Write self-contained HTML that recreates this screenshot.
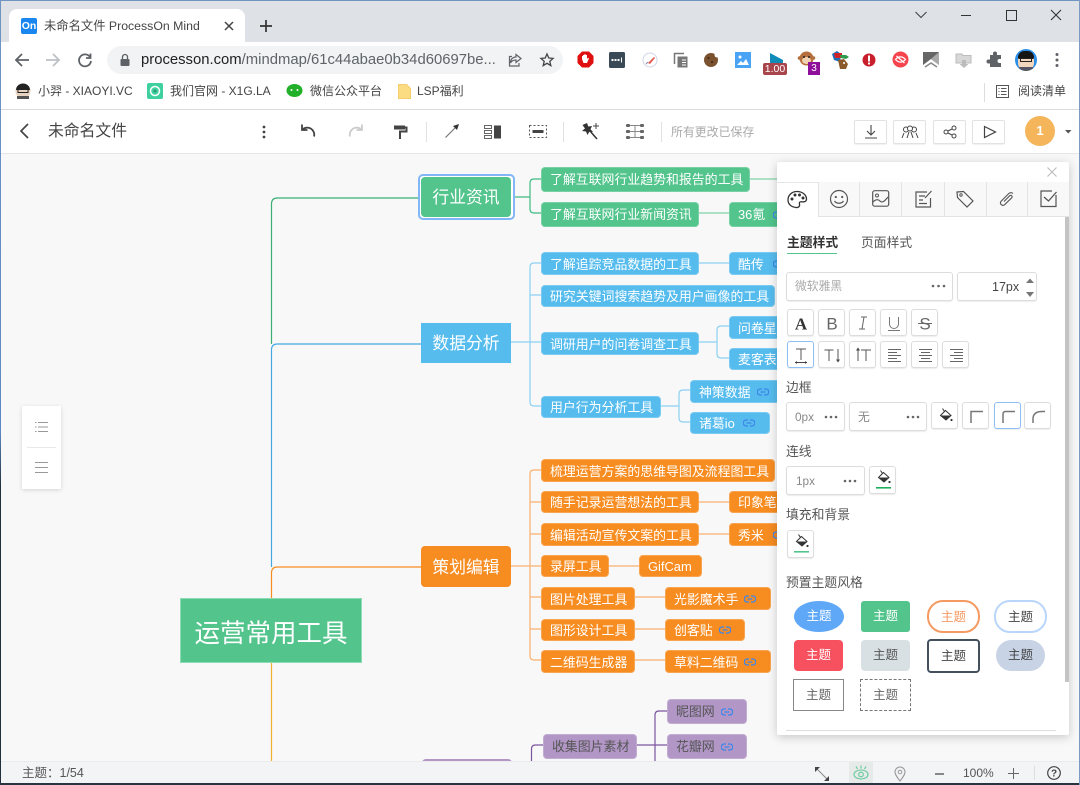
<!DOCTYPE html>
<html><head><meta charset="utf-8">
<style>
*{box-sizing:border-box}
html{background:#f8f8f8}
html,body{margin:0;padding:0;width:1080px;height:785px;overflow:hidden;font-family:"Liberation Sans","Noto Sans CJK SC",sans-serif;color:#444}
body{background:#f8f8f8;filter:blur(.3px)}
.a{position:absolute}
svg{position:absolute;overflow:visible}
.n{position:absolute;border-radius:4px;color:#fff;font-size:12.9px;padding-left:8px;padding-top:1px;white-space:nowrap;border:1px solid rgba(255,255,255,.22);overflow:hidden}
.g{background:#52c48c}.b{background:#56bcee}.o{background:#f78c21}.p{background:#b196c6;color:#555}
.m{position:absolute;width:90px;text-align:center;color:#fff;font-size:16.8px;white-space:nowrap}
.n svg{position:absolute;top:50%;margin-top:-4px}
.btn{position:absolute;background:#fff;border:1px solid #ddd;border-radius:3px;box-shadow:0 1px 1px rgba(0,0,0,.08)}
.btn svg{left:0;top:0}
.lb{position:absolute;font-size:12.8px;color:#555;white-space:nowrap}
.bm{position:absolute;top:84px;font-size:12px;color:#444;white-space:nowrap;line-height:14px}
.tb{position:absolute;top:120px;height:24px;width:33px;background:#fff;border:1px solid #e2e2e2;border-radius:2px;box-shadow:0 1px 1px rgba(0,0,0,.06)}
.pr{position:absolute;font-size:12.5px;text-align:center;white-space:nowrap}
.tsep{position:absolute;top:182px;height:35px;width:1px;background:#e3e3e3}
</style></head><body>
<svg width="0" height="0" style="position:absolute"><defs>
<symbol id="lk" viewBox="0 0 12 8"><path d="M5 1H3.200a3 3 0 0 0 0 6H5M7 1h1.800a3 3 0 0 1 0 6H7M3.600 4h4.800" fill="none" stroke="#3f86e8" stroke-width="1.300"/></symbol>
<symbol id="bk" viewBox="0 0 27 27"><path d="M13.500 7.500L19 12.500 14 17 8.500 12.500z" fill="#fff" stroke="#333" stroke-width="1"/><path d="M8.500 12.500H19L14 17z" fill="#333"/><path d="M12.500 8.500L10.500 5.500" stroke="#333" stroke-width="1"/><circle cx="19.500" cy="17" r="1.100" fill="#333"/></symbol>
</defs></svg>

<!-- Chrome -->
<div class="a" style="left:0;top:0;width:1080px;height:42px;background:#dee1e6"></div>
<div class="a" style="left:9px;top:9px;width:236px;height:33px;background:#fff;border-radius:8px 8px 0 0"></div>
<div class="a" style="left:21px;top:18px;width:16px;height:16px;background:#1a86f0;border-radius:2px;color:#fff;font-size:10.500px;font-weight:bold;line-height:16px;text-align:center">On</div>
<div class="a" style="left:44px;top:18px;font-size:12.300px;color:#444;white-space:nowrap;line-height:16px">未命名文件 ProcessOn Mind</div>
<svg style="left:223px;top:20px" width="12" height="12"><path d="M2 2l8 8M10 2l-8 8" stroke="#444" stroke-width="1.500"/></svg>
<svg style="left:259px;top:19px" width="14" height="14"><path d="M7 1v12M1 7h12" stroke="#333" stroke-width="1.700"/></svg>
<svg style="left:914px;top:10px" width="14" height="10"><path d="M1.500 2l5.500 5.500L12.500 2" fill="none" stroke="#444" stroke-width="1.100"/></svg>
<div class="a" style="left:961px;top:15px;width:10px;height:1px;background:#333"></div>
<div class="a" style="left:1006px;top:10px;width:11px;height:11px;border:1.200px solid #333"></div>
<svg style="left:1050px;top:9px" width="12" height="12"><path d="M1 1l10 10M11 1L1 11" stroke="#333" stroke-width="1.100"/></svg>

<div class="a" style="left:0;top:42px;width:1080px;height:67px;background:#fff"></div>
<div class="a" style="left:0;top:109px;width:1080px;height:1px;background:#dadce0"></div>
<svg style="left:14px;top:52px" width="16" height="16"><path d="M15 8H2M8 2L2 8l6 6" fill="none" stroke="#5f6368" stroke-width="1.800"/></svg>
<svg style="left:45px;top:52px" width="16" height="16"><path d="M1 8h13M8 2l6 6-6 6" fill="none" stroke="#bdc1c6" stroke-width="1.800"/></svg>
<svg style="left:77px;top:52px" width="16" height="16"><path d="M13 5A6 6 0 1 0 14 9M13.500 1.500V6H9" fill="none" stroke="#5f6368" stroke-width="1.800"/></svg>
<div class="a" style="left:107px;top:46px;width:456px;height:28px;background:#f1f3f4;border-radius:14px"></div>
<svg style="left:120px;top:54px" width="10" height="12"><rect x="0.500" y="5" width="9" height="7" rx="1" fill="#5f6368"/><path d="M2.500 5V3a2.500 2.500 0 0 1 5 0v2" fill="none" stroke="#5f6368" stroke-width="1.300"/></svg>
<div class="a" style="left:141px;top:51px;font-size:14.850px;color:#202124;white-space:nowrap;line-height:18px">processon.com<span style="color:#5f6368">/mindmap/61c44abae0b34d60697be...</span></div>
<svg style="left:508px;top:53px" width="14" height="14"><path d="M8 1.500l5 4-5 4V7C5 7 3.500 8 2.500 10 2.500 6.500 4.500 4 8 4zM11 10v3H1.500V3.500H4" fill="none" stroke="#5f6368" stroke-width="1.200"/></svg>
<svg style="left:540px;top:53px" width="14" height="14"><path d="M7 1l1.800 4 4.300.4-3.300 2.900 1 4.300L7 10.300 3.200 12.600l1-4.300L.9 5.400 5.200 5z" fill="none" stroke="#444" stroke-width="1.300"/></svg>

<!-- extensions -->
<svg style="left:577px;top:51px" width="17" height="17"><path d="M5 .5h7L16.500 5v7L12 16.500H5L.5 12V5z" fill="#e01010"/><path d="M5 8V5h1v2-3h1.300v3V3.300H8.700V7V4H10v4l1-1.300 1 .6L10 12H6.500z" fill="#fff"/></svg>
<svg style="left:609px;top:52px" width="16" height="16"><rect width="16" height="16" rx="1.500" fill="#3a4a57"/><rect x="2.500" y="7" width="2" height="2" fill="#fff"/><rect x="5.500" y="7" width="2" height="2" fill="#fff"/><rect x="8.500" y="7" width="2" height="2" fill="#fff"/><rect x="12" y="5.500" width="1" height="5" fill="#fff"/></svg>
<svg style="left:642px;top:52px" width="16" height="16"><circle cx="8" cy="8" r="7" fill="#fff" stroke="#cfd6e8"/><path d="M6 11l6-6 1 1-5 6z" fill="#e0574f"/><path d="M4 12l2-2" stroke="#88a" stroke-width="1"/></svg>
<svg style="left:673px;top:52px" width="16" height="16"><path d="M1.500 12V1.500H11" fill="none" stroke="#777" stroke-width="1.500"/><rect x="4.500" y="4.500" width="10" height="11" fill="#777"/><path d="M9 8h4M9 10.500h4M9 13h4" stroke="#fff"/></svg>
<svg style="left:703px;top:52px" width="16" height="16"><circle cx="8" cy="8" r="7" fill="#7a5230"/><circle cx="5.500" cy="6" r="1" fill="#3b2412"/><circle cx="9" cy="10" r="1" fill="#3b2412"/><circle cx="14" cy="3" r="2.500" fill="#fff"/></svg>
<svg style="left:735px;top:52px" width="16" height="16"><rect width="16" height="16" fill="#4aa3f5"/><circle cx="5" cy="5" r="1.500" fill="#fff"/><path d="M2 13l4-4 2 2 3-4 3 6z" fill="#fff"/></svg>
<svg style="left:767px;top:52px" width="20" height="13"><path d="M3 1l13 7v3H3z" fill="#0f8cb8"/></svg>
<div class="a" style="left:763px;top:63px;width:24px;height:12px;background:#a8444c;border-radius:2px;color:#fff;font-size:10.500px;line-height:12px;text-align:center">1.00</div>
<svg style="left:798px;top:51px" width="18" height="17"><circle cx="8.500" cy="7.500" r="7" fill="#b56f3c"/><circle cx="1.500" cy="7" r="1.800" fill="#b56f3c"/><circle cx="15.500" cy="7" r="1.800" fill="#b56f3c"/><ellipse cx="8.500" cy="9.500" rx="4.500" ry="3.500" fill="#f0d2b0"/><circle cx="6" cy="6" r="1" fill="#222"/><circle cx="11" cy="6" r="1" fill="#222"/></svg>
<div class="a" style="left:808px;top:62px;width:12px;height:13px;background:#8e0f99;color:#fff;font-size:10px;line-height:13px;text-align:center">3</div>
<svg style="left:831px;top:51px" width="20" height="19"><path d="M1 3l5-3 4 3-1 8-6-2z" fill="#1f6fb8"/><path d="M3 2h8v5H4z" fill="#d0232a"/><path d="M9 4h6l3 2-3 2-5-1z" fill="#2e9c4b"/><path d="M7 9l6-1 4 5-2 5H9z" fill="#8b5a2b"/><circle cx="13" cy="12" r="1" fill="#fff"/></svg>
<svg style="left:861px;top:52px" width="16" height="16"><circle cx="8" cy="8" r="6.500" fill="#c8202c"/><rect x="7" y="3.500" width="2" height="6" fill="#fff"/><rect x="7" y="10.500" width="2" height="2" fill="#fff"/></svg>
<svg style="left:892px;top:51px" width="17" height="17"><circle cx="8.500" cy="8.500" r="8" fill="#f5444e"/><path d="M3.500 8.500c3-3.500 7-3.500 10 0-3 3.500-7 3.500-10 0zM4.500 5l8 7" fill="none" stroke="#fff" stroke-width="1.200"/></svg>
<svg style="left:923px;top:52px" width="16" height="16"><path d="M0 0h16v13L8 7 0 13z" fill="#666"/><path d="M16 0v13L8 7z" fill="#aaa"/><path d="M2 15l6-4 6 4" fill="none" stroke="#888" stroke-width="1.500"/></svg>
<svg style="left:955px;top:52px" width="17" height="17"><path d="M1 2h6l1 1.500h8V11H1z" fill="#d8d8d8" stroke="#bbb"/><path d="M7 8h4v4h2.500L9 16l-4.500-4H7z" fill="#bbb"/></svg>
<svg style="left:987px;top:52px" width="16" height="16"><path d="M6 1.500a2 2 0 0 1 4 0V3h4v4h-1.500a2 2 0 0 0 0 4H14v4H3V11.500H1.500a2 2 0 0 1 0-4H3V3h3z" fill="#5f6368"/></svg>
<div class="a" style="left:1015px;top:49px;width:22px;height:22px;border-radius:50%;background:#2b8fe8;overflow:hidden">
 <div class="a" style="left:3px;top:3px;width:16px;height:19px;border-radius:8px;background:#f1d6bd"></div>
 <div class="a" style="left:3px;top:2px;width:16px;height:8px;border-radius:8px 8px 2px 2px;background:#151515"></div>
 <div class="a" style="left:5px;top:9px;width:12px;height:4px;border:1px solid #222"></div>
 <div class="a" style="left:4px;top:18px;width:14px;height:5px;background:#556"></div>
</div>
<svg style="left:1055px;top:52px" width="4" height="16"><circle cx="2" cy="2.500" r="1.500" fill="#5f6368"/><circle cx="2" cy="8" r="1.500" fill="#5f6368"/><circle cx="2" cy="13.500" r="1.500" fill="#5f6368"/></svg>

<!-- bookmarks -->
<svg style="left:15px;top:83px" width="16" height="16"><circle cx="8" cy="8" r="7.500" fill="#e8d3c0"/><path d="M1 7a7 6.500 0 0 1 14 0z" fill="#222"/><rect x="3" y="6.500" width="10" height="3" fill="none" stroke="#222"/><path d="M2 13h12v3H2z" fill="#555"/></svg>
<div class="bm" style="left:38px">小羿 - XIAOYI.VC</div>
<svg style="left:147px;top:83px" width="16" height="16"><rect width="16" height="16" rx="2" fill="#3fd0a0"/><circle cx="8" cy="8" r="4.500" fill="none" stroke="#fff" stroke-width="1.500"/><circle cx="8" cy="8" r="1.500" fill="#2a9a78"/></svg>
<div class="bm" style="left:170px">我们官网 - X1G.LA</div>
<svg style="left:286px;top:84px" width="17" height="14"><ellipse cx="8.500" cy="6.500" rx="8" ry="6.500" fill="#22b02a"/><circle cx="5.500" cy="6" r="1" fill="#fff"/><circle cx="11.500" cy="6" r="1" fill="#fff"/></svg>
<div class="bm" style="left:310px">微信公众平台</div>
<svg style="left:398px;top:84px" width="13" height="15"><path d="M.5.500h8l4 4v10H.5z" fill="#fbdc82" stroke="#f4ce6a"/></svg>
<div class="bm" style="left:417px">LSP福利</div>
<div class="a" style="left:984px;top:83px;width:1px;height:19px;background:#ddd"></div>
<svg style="left:996px;top:85px" width="13" height="13"><rect x=".5" y=".5" width="12" height="12" fill="none" stroke="#555"/><path d="M2.500 3.500h1M5 3.500h5.500M2.500 6.500h1M5 6.500h5.500M2.500 9.500h1M5 9.500h5.500" stroke="#555"/></svg>
<div class="bm" style="left:1018px">阅读清单</div>

<!-- App toolbar -->
<div class="a" style="left:0;top:110px;width:1080px;height:44px;background:#fff;border-bottom:1px solid #e6e6e6"></div>
<svg style="left:18px;top:122px" width="12" height="18"><path d="M10 2L3 9l7 7" fill="none" stroke="#444" stroke-width="1.700"/></svg>
<div class="a" style="left:48px;top:122px;font-size:15.800px;color:#444;white-space:nowrap;line-height:20px">未命名文件</div>
<svg style="left:262px;top:125px" width="4" height="14"><circle cx="2" cy="2" r="1.400" fill="#444"/><circle cx="2" cy="7" r="1.400" fill="#444"/><circle cx="2" cy="12" r="1.400" fill="#444"/></svg>
<svg style="left:300px;top:123px" width="18" height="16"><path d="M2 1.500V7h5.500M2.500 6.500A7 7 0 0 1 14 13.500" fill="none" stroke="#444" stroke-width="1.800"/></svg>
<svg style="left:346px;top:123px" width="18" height="16"><path d="M16 1.500V7h-5.500M15.500 6.500A7 7 0 0 0 4 13.500" fill="none" stroke="#ccc" stroke-width="1.800"/></svg>
<svg style="left:393px;top:124px" width="14" height="16"><path d="M1 1.500h11v4H1z" fill="#444"/><path d="M12 3.500h1.500v4H7V15" fill="none" stroke="#444" stroke-width="2"/></svg>
<div class="a" style="left:426px;top:122px;width:1px;height:20px;background:#e2e2e2"></div>
<svg style="left:444px;top:123px" width="16" height="16"><path d="M1.500 14.500L11 5" stroke="#777" stroke-width="1.200"/><path d="M9 3l6-2-2 6z" fill="#333"/></svg>
<svg style="left:484px;top:125px" width="18" height="14"><path d="M.5.500h7v3h-7zM.5 5.500h7v3h-7zM.5 10.500h7v3h-7z" fill="none" stroke="#666"/><rect x="10" y=".5" width="7" height="13" fill="#444"/></svg>
<svg style="left:529px;top:125px" width="18" height="13"><rect x=".5" y=".5" width="17" height="12" fill="none" stroke="#555" stroke-dasharray="2 2"/><rect x="3.500" y="5" width="11" height="3" fill="#444"/></svg>
<div class="a" style="left:563px;top:122px;width:1px;height:20px;background:#e2e2e2"></div>
<svg style="left:580px;top:122px" width="20" height="18"><path d="M7 1l1.300 3.500L12 4l-1.500 3.200L13 10l-3.700-.3L7.500 13 6 9.500 2 9l3-2.500L2.500 3z" fill="#333"/><path d="M10 9l7 8" stroke="#333" stroke-width="1.500"/><path d="M16 1v6M13 4h6" stroke="#444"/></svg>
<svg style="left:626px;top:124px" width="18" height="15"><path d="M1 1.500h16M1 7.500h16M1 13.500h16M9 1.500v12" stroke="#888" stroke-width="1"/><g fill="#666"><rect x="0" y="0" width="4" height="3" rx="1"/><rect x="14" y="0" width="4" height="3" rx="1"/><rect x="0" y="6" width="4" height="3" rx="1"/><rect x="14" y="6" width="4" height="3" rx="1"/><rect x="0" y="12" width="4" height="3" rx="1"/><rect x="14" y="12" width="4" height="3" rx="1"/></g></svg>
<div class="a" style="left:661px;top:122px;width:1px;height:20px;background:#e2e2e2"></div>
<div class="a" style="left:671px;top:124px;font-size:11.900px;color:#aaa;white-space:nowrap;line-height:16px">所有更改已保存</div>
<div class="tb" style="left:854px"><svg style="left:9px;top:3px" width="14" height="16"><path d="M7 1v10M3 7l4 4 4-4M1 14h12" fill="none" stroke="#444" stroke-width="1.100"/></svg></div>
<div class="tb" style="left:893px"><svg style="left:7px;top:4px" width="18" height="14"><circle cx="5" cy="4.500" r="2.500" fill="none" stroke="#444"/><circle cx="13" cy="4.500" r="2.500" fill="none" stroke="#444"/><circle cx="9" cy="3.500" r="2.500" fill="#fff" stroke="#444"/><path d="M1 13l2-5M17 13l-2-5M6 13l2-6M12 13l-2-6" stroke="#444" fill="none"/></svg></div>
<div class="tb" style="left:933px"><svg style="left:9px;top:4px" width="14" height="14"><circle cx="11" cy="3" r="2" fill="none" stroke="#444"/><circle cx="3" cy="7" r="2" fill="none" stroke="#444"/><circle cx="11" cy="11" r="2" fill="none" stroke="#444"/><path d="M5 6l4-2M5 8l4 2" stroke="#444"/></svg></div>
<div class="tb" style="left:972px"><svg style="left:10px;top:4px" width="14" height="14"><path d="M1.500 1.500l11 5.500-11 5.500z" fill="none" stroke="#444" stroke-width="1.200"/></svg></div>
<div class="a" style="left:1025px;top:116px;width:30px;height:30px;border-radius:50%;background:#f5b65b;color:#fff;font-size:13px;font-weight:bold;text-align:center;line-height:30px">1</div>
<svg style="left:1065px;top:130px" width="7" height="4"><path d="M0 0h6.500L3.250 3.500z" fill="#555"/></svg>

<!-- Lines -->
<svg style="left:0;top:0" width="1080" height="785" fill="none" stroke-width="1.200">
<path d="M271.500 344V204Q271.500 198 277.500 198H421" stroke="#3aae75"/>
<path d="M271.500 567V350Q271.500 344 277.500 344H421" stroke="#45a8e0"/>
<path d="M271.500 598V573Q271.500 567 277.500 567H421" stroke="#f78c21"/>
<path d="M271.500 663V762" stroke="#f0b030"/>
<g stroke="#3fbb80"><path d="M511 197H530M541 179H534Q530 179 530 183V209Q530 213 534 213H541"/><path d="M699 213H729M750 179H780" stroke="#7fd3aa"/></g>
<g stroke="#8bd0f2"><path d="M511 342H541M541 263H534Q530 263 530 267V402Q530 406 534 406H541M530 295H541M699 263H729M699 342H717M729 326H721Q717 326 717 330V354Q717 358 721 358H729M661 406H679M690 390H683Q679 390 679 394V418Q679 422 683 422H690"/></g>
<g stroke="#f9b06e"><path d="M511 566H541M541 470H534Q530 470 530 474V656Q530 660 534 660H541M530 502H541M530 534H541M530 597H541M530 629H541M699 502H729M699 534H729M609 566H639M635 597H665M635 629H665M635 660H665"/></g>
<g stroke="#7b54a0"><path d="M531.500 762V749Q531.500 745 535.500 745H543M637 745H667M667 711H659Q655 711 655 715V762"/></g>
</svg>

<!-- Nodes -->
<div class="a" style="left:418px;top:174px;width:97px;height:46px;border:2px solid #82b6f6;border-radius:5px;background:#fff"></div>
<div class="m g" style="left:421px;top:177px;height:40px;line-height:41px;border-radius:4px">行业资讯</div>
<div class="m b" style="left:421px;top:323px;height:40px;line-height:42px">数据分析</div>
<div class="m o" style="left:421px;top:546px;height:41px;line-height:44px;border-radius:4px">策划编辑</div>
<div class="m p" style="left:422px;top:759px;height:30px;border-radius:4px"></div>
<div class="a" style="left:180px;top:598px;width:182px;height:65px;background:#52c48c;color:#fff;font-size:25.500px;text-align:center;line-height:71px;white-space:nowrap;border:1px solid #8edcb6">运营常用工具</div>

<div class="n g" style="left:541px;top:167px;width:209px;height:25px;line-height:22px">了解互联网行业趋势和报告的工具</div>
<div class="n g" style="left:541px;top:202px;width:158px;height:25px;line-height:22px">了解互联网行业新闻资讯</div>
<div class="n g" style="left:729px;top:202px;width:70px;height:25px;line-height:22px">36氪<svg style="left:43px" width="12" height="8"><use href="#lk"/></svg></div>
<div class="n b" style="left:541px;top:252px;width:158px;height:23px;line-height:21px">了解追踪竞品数据的工具</div>
<div class="n b" style="left:729px;top:252px;width:70px;height:23px;line-height:21px">酷传<svg style="left:43px" width="12" height="8"><use href="#lk"/></svg></div>
<div class="n b" style="left:541px;top:285px;width:234px;height:22px;line-height:20px">研究关键词搜索趋势及用户画像的工具</div>
<div class="n b" style="left:541px;top:332px;width:158px;height:23px;line-height:21px">调研用户的问卷调查工具</div>
<div class="n b" style="left:729px;top:316px;width:70px;height:23px;line-height:21px">问卷星</div>
<div class="n b" style="left:729px;top:348px;width:70px;height:22px;line-height:20px">麦客表</div>
<div class="n b" style="left:541px;top:396px;width:120px;height:22px;line-height:20px">用户行为分析工具</div>
<div class="n b" style="left:690px;top:380px;width:90px;height:23px;line-height:21px">神策数据<svg style="left:66px" width="12" height="8"><use href="#lk"/></svg></div>
<div class="n b" style="left:690px;top:412px;width:80px;height:22px;line-height:20px">诸葛io<svg style="left:52px" width="12" height="8"><use href="#lk"/></svg></div>

<div class="n o" style="left:541px;top:459px;width:234px;height:23px;line-height:21px">梳理运营方案的思维导图及流程图工具</div>
<div class="n o" style="left:541px;top:491px;width:158px;height:22px;line-height:20px">随手记录运营想法的工具</div>
<div class="n o" style="left:729px;top:491px;width:70px;height:22px;line-height:20px">印象笔记</div>
<div class="n o" style="left:541px;top:523px;width:158px;height:23px;line-height:21px">编辑活动宣传文案的工具</div>
<div class="n o" style="left:729px;top:523px;width:70px;height:23px;line-height:21px">秀米<svg style="left:43px" width="12" height="8"><use href="#lk"/></svg></div>
<div class="n o" style="left:541px;top:555px;width:68px;height:22px;line-height:20px">录屏工具</div>
<div class="n o" style="left:639px;top:555px;width:63px;height:22px;line-height:20px">GifCam</div>
<div class="n o" style="left:541px;top:587px;width:94px;height:23px;line-height:21px">图片处理工具</div>
<div class="n o" style="left:665px;top:587px;width:106px;height:23px;line-height:21px">光影魔术手<svg style="left:78px" width="12" height="8"><use href="#lk"/></svg></div>
<div class="n o" style="left:541px;top:619px;width:94px;height:22px;line-height:20px">图形设计工具</div>
<div class="n o" style="left:665px;top:619px;width:80px;height:22px;line-height:20px">创客贴<svg style="left:53px" width="12" height="8"><use href="#lk"/></svg></div>
<div class="n o" style="left:541px;top:650px;width:94px;height:23px;line-height:21px">二维码生成器</div>
<div class="n o" style="left:665px;top:650px;width:106px;height:23px;line-height:21px">草料二维码<svg style="left:78px" width="12" height="8"><use href="#lk"/></svg></div>
<div class="n p" style="left:667px;top:699px;width:80px;height:25px;line-height:22px">昵图网<svg style="left:53px" width="12" height="8"><use href="#lk"/></svg></div>
<div class="n p" style="left:667px;top:734px;width:80px;height:25px;line-height:22px">花瓣网<svg style="left:53px" width="12" height="8"><use href="#lk"/></svg></div>
<div class="n p" style="left:543px;top:734px;width:94px;height:25px;line-height:22px">收集图片素材</div>

<!-- Left floating -->
<div class="a" style="left:22px;top:406px;width:39px;height:83px;background:#fff;box-shadow:0 1px 4px rgba(0,0,0,.15);border-radius:1px"></div>
<div class="a" style="left:27px;top:447px;width:29px;height:1px;background:#e8e8e8"></div>
<svg style="left:35px;top:421px" width="13" height="12"><path d="M3 1.500h10M3 6h10M3 10.500h10" stroke="#999"/><path d="M0 1.500h1.500M0 6h1.500M0 10.500h1.500" stroke="#999"/></svg>
<svg style="left:35px;top:461px" width="13" height="13"><path d="M0 1.500h13M0 6.500h13M0 11.500h13" stroke="#999" stroke-width="1.100"/></svg>

<!-- Panel -->
<div class="a" style="left:777px;top:162px;width:292px;height:573px;background:#fff;box-shadow:0 2px 10px rgba(0,0,0,.2);border-radius:2px"></div>
<svg style="left:1047px;top:167px" width="10" height="10"><path d="M.5.500l9 9M9.500.5l-9 9" stroke="#bbb" stroke-width="1.100"/></svg>
<div class="a" style="left:777px;top:182px;width:292px;height:1px;background:#e6e6e6"></div>
<div class="a" style="left:818px;top:182px;width:251px;height:35px;background:#f8f8f8;border-bottom:1px solid #e3e3e3"></div>
<div class="tsep" style="left:818px"></div><div class="tsep" style="left:859px"></div><div class="tsep" style="left:901px"></div><div class="tsep" style="left:944px"></div><div class="tsep" style="left:986px"></div><div class="tsep" style="left:1027px"></div>
<svg style="left:787px;top:190px" width="21" height="19"><path d="M10 1.500c5.500 0 9.500 3.500 9.500 7.500 0 3-3 3-5 2.800-2-.2-2.500 1-2 2.500.5 2-1 3.500-3.500 3.200C4 17 1 14 1 10 1 5 5 1.500 10 1.500z" fill="none" stroke="#333" stroke-width="1.300"/><circle cx="5" cy="9" r="1.500" fill="#333"/><circle cx="8" cy="5" r="1.500" fill="#333"/><circle cx="12.500" cy="5" r="1.500" fill="#333"/><circle cx="16" cy="8" r="1.500" fill="#333"/></svg>
<svg style="left:829px;top:189px" width="20" height="20"><circle cx="10" cy="10" r="8.500" fill="none" stroke="#555" stroke-width="1.200"/><circle cx="6.800" cy="8" r="1.100" fill="#555"/><circle cx="13.200" cy="8" r="1.100" fill="#555"/><path d="M5.500 12c2 3 7 3 9 0" fill="none" stroke="#555" stroke-width="1.200"/></svg>
<svg style="left:872px;top:190px" width="18" height="18"><rect x=".7" y=".7" width="16" height="15.500" rx="2" fill="none" stroke="#555" stroke-width="1.200"/><circle cx="5" cy="5.500" r="1.500" fill="none" stroke="#555"/><path d="M1 12c3-3 5-3 7-1s4 1 8-4" fill="none" stroke="#555" stroke-width="1.200"/></svg>
<svg style="left:915px;top:190px" width="18" height="18"><path d="M15.500 8v9H1V2h11" fill="none" stroke="#555" stroke-width="1.200"/><path d="M4 6h6M4 10h4M4 13.500h8" stroke="#555" stroke-width="1.200"/><path d="M16.500 1L10 8" stroke="#555" stroke-width="1.200"/></svg>
<svg style="left:956px;top:190px" width="18" height="18"><path d="M1 2l6.500-.5 9.500 9.500-6 6-9.500-9.500z" fill="none" stroke="#555" stroke-width="1.200"/><circle cx="5" cy="5" r="1.200" fill="none" stroke="#555"/></svg>
<svg style="left:998px;top:190px" width="18" height="18"><path d="M15 3.500a3 3 0 0 0-4.200 0L3 11.300a2.500 2.500 0 0 0 3.500 3.500L14 7.500a1.500 1.500 0 0 0-2-2L6 11.500" fill="none" stroke="#555" stroke-width="1.100"/></svg>
<svg style="left:1040px;top:190px" width="18" height="18"><path d="M12 1H1v15.500h15V5" fill="none" stroke="#555" stroke-width="1.200"/><path d="M4 7l4.500 4L16.500 2" fill="none" stroke="#555" stroke-width="1.300"/></svg>
<div class="a" style="left:1065px;top:217px;width:4px;height:465px;background:#c4c4c4"></div>

<div class="lb" style="left:787px;top:234px;color:#333;font-weight:bold;line-height:18px">主题样式</div>
<div class="a" style="left:787px;top:253px;width:50px;height:1px;background:#52c48c"></div>
<div class="lb" style="left:861px;top:234px;line-height:18px">页面样式</div>

<div class="btn" style="left:786px;top:272px;width:167px;height:29px"></div>
<div class="lb" style="left:795px;top:278px;font-size:11.800px;color:#aaa;line-height:16px">微软雅黑</div>
<svg style="left:931px;top:284px" width="16" height="4"><circle cx="2" cy="2" r="1.300" fill="#666"/><circle cx="7.500" cy="2" r="1.300" fill="#666"/><circle cx="13" cy="2" r="1.300" fill="#666"/></svg>
<div class="btn" style="left:957px;top:272px;width:80px;height:29px"></div>
<div class="lb" style="left:992px;top:279px;font-size:12.500px;color:#444;line-height:16px">17px</div>
<svg style="left:1025px;top:278px" width="10" height="20"><path d="M5 .5L9 5H1zM5 19l-4-5h8z" fill="#777"/></svg>

<div class="btn" style="left:787px;top:309px;width:27px;height:27px"><svg width="27" height="27"><text x="13" y="19.500" font-size="17" font-weight="bold" font-family="Liberation Serif" text-anchor="middle" fill="#333">A</text></svg></div>
<div class="btn" style="left:818px;top:309px;width:27px;height:27px"><svg width="27" height="27"><text x="13" y="19.500" font-size="17" font-family="Liberation Sans" text-anchor="middle" fill="#666">B</text></svg></div>
<div class="btn" style="left:849px;top:309px;width:27px;height:27px"><svg width="27" height="27"><path d="M11 7h6M9 19h6M14 7l-2 12" stroke="#666" fill="none"/></svg></div>
<div class="btn" style="left:880px;top:309px;width:27px;height:27px"><svg width="27" height="27"><path d="M8.500 7v7a4.500 4.500 0 0 0 9 0V7M7 20.500h12" stroke="#777" fill="none"/></svg></div>
<div class="btn" style="left:911px;top:309px;width:27px;height:27px"><svg width="27" height="27"><text x="13" y="19.500" font-size="17" font-family="Liberation Sans" text-anchor="middle" fill="#666">S</text><path d="M6 13.500h14" stroke="#666"/></svg></div>

<div class="btn" style="left:787px;top:341px;width:27px;height:27px;border-color:#8fc0f5"><svg width="27" height="27"><path d="M8 7h10M13 7v11M9 7h8" stroke="#555" fill="none"/><path d="M7 20.500h12" stroke="#444"/><path d="M7 20.500l2-1.500v3zM19 20.500l-2-1.500v3z" fill="#444"/></svg></div>
<div class="btn" style="left:818px;top:341px;width:27px;height:27px"><svg width="27" height="27"><path d="M5.500 8h9M10 8v11M19 7v12" stroke="#555" fill="none"/><path d="M19 20.500l-2-3h4z" fill="#444"/></svg></div>
<div class="btn" style="left:849px;top:341px;width:27px;height:27px"><svg width="27" height="27"><path d="M11 8h10M16 8v11M8 7v12" stroke="#555" fill="none"/><path d="M8 5.500l-2 3h4z" fill="#444"/></svg></div>
<div class="btn" style="left:880px;top:341px;width:27px;height:27px"><svg width="27" height="27"><path d="M7 7.500h13M7 10.500h9M7 13.500h13M7 16.500h9M7 19.500h13" stroke="#666"/></svg></div>
<div class="btn" style="left:911px;top:341px;width:27px;height:27px"><svg width="27" height="27"><path d="M7 7.500h13M9 10.500h9M7 13.500h13M9 16.500h9M7 19.500h13" stroke="#666"/></svg></div>
<div class="btn" style="left:942px;top:341px;width:27px;height:27px"><svg width="27" height="27"><path d="M7 7.500h13M11 10.500h9M7 13.500h13M11 16.500h9M7 19.500h13" stroke="#666"/></svg></div>

<div class="lb" style="left:786px;top:379px;line-height:18px">边框</div>
<div class="btn" style="left:786px;top:402px;width:59px;height:29px"></div>
<div class="lb" style="left:795px;top:409px;font-size:11.800px;color:#888;line-height:16px">0px</div>
<svg style="left:824px;top:415px" width="14" height="4"><circle cx="2" cy="2" r="1.300" fill="#666"/><circle cx="7" cy="2" r="1.300" fill="#666"/><circle cx="12" cy="2" r="1.300" fill="#666"/></svg>
<div class="btn" style="left:849px;top:402px;width:78px;height:29px"></div>
<div class="lb" style="left:858px;top:409px;font-size:11.800px;color:#888;line-height:16px">无</div>
<svg style="left:906px;top:415px" width="14" height="4"><circle cx="2" cy="2" r="1.300" fill="#666"/><circle cx="7" cy="2" r="1.300" fill="#666"/><circle cx="12" cy="2" r="1.300" fill="#666"/></svg>
<div class="btn" style="left:931px;top:402px;width:27px;height:27px"><svg width="27" height="27"><use href="#bk" width="27" height="27"/></svg></div>
<div class="btn" style="left:962px;top:402px;width:27px;height:27px"><svg width="27" height="27"><path d="M8 20V8.500h12" fill="none" stroke="#777" stroke-width="1.500"/></svg></div>
<div class="btn" style="left:994px;top:402px;width:27px;height:27px;border-color:#8fc0f5"><svg width="27" height="27"><path d="M8 20v-9q0-2.500 2.500-2.500H20" fill="none" stroke="#777" stroke-width="1.500"/></svg></div>
<div class="btn" style="left:1024px;top:402px;width:27px;height:27px"><svg width="27" height="27"><path d="M8 20v-4q0-7.500 9-7.500h3" fill="none" stroke="#777" stroke-width="1.500"/></svg></div>

<div class="lb" style="left:786px;top:443px;line-height:18px">连线</div>
<div class="btn" style="left:786px;top:466px;width:79px;height:29px"></div>
<div class="lb" style="left:796px;top:473px;font-size:11.800px;color:#888;line-height:16px">1px</div>
<svg style="left:843px;top:479px" width="14" height="4"><circle cx="2" cy="2" r="1.300" fill="#666"/><circle cx="7" cy="2" r="1.300" fill="#666"/><circle cx="12" cy="2" r="1.300" fill="#666"/></svg>
<div class="btn" style="left:869px;top:466px;width:27px;height:28px"><svg width="27" height="27"><use href="#bk" width="27" height="27" y="-2"/><rect x="6" y="20" width="15" height="1.600" fill="#1fae5a"/></svg></div>
<div class="lb" style="left:786px;top:506px;line-height:18px">填充和背景</div>
<div class="btn" style="left:787px;top:530px;width:27px;height:28px"><svg width="27" height="27"><use href="#bk" width="27" height="27" y="-2"/><rect x="6" y="20" width="15" height="1.600" fill="#52c48c"/></svg></div>
<div class="lb" style="left:786px;top:574px;line-height:18px">预置主题风格</div>

<div class="pr" style="left:794px;top:601px;width:50px;height:31px;line-height:31px;background:#5fa8f8;border-radius:50%;color:#fff">主题</div>
<div class="pr" style="left:861px;top:601px;width:49px;height:31px;line-height:31px;background:#52c48c;border-radius:3px;color:#fff">主题</div>
<div class="pr" style="left:927px;top:600px;width:53px;height:33px;line-height:30px;border:2px solid #f59a62;border-radius:16px;color:#f59a62;background:#fff">主题</div>
<div class="pr" style="left:994px;top:600px;width:53px;height:33px;line-height:30px;border:2px solid #b9d6fa;border-radius:16px;color:#444;background:#fff">主题</div>
<div class="pr" style="left:794px;top:640px;width:49px;height:31px;line-height:31px;background:#f7505e;border-radius:4px;color:#fff">主题</div>
<div class="pr" style="left:861px;top:640px;width:49px;height:31px;line-height:31px;background:#d8e0e3;border-radius:4px;color:#555">主题</div>
<div class="pr" style="left:927px;top:639px;width:53px;height:34px;line-height:31px;border:2px solid #44505c;border-radius:4px;color:#444;background:#fff">主题</div>
<div class="pr" style="left:996px;top:640px;width:49px;height:31px;line-height:31px;background:#c8d3e6;border-radius:16px;color:#444">主题</div>
<div class="pr" style="left:793px;top:679px;width:51px;height:32px;line-height:30px;border:1px solid #888;color:#666;background:#fff">主题</div>
<div class="pr" style="left:860px;top:679px;width:51px;height:32px;line-height:30px;border:1px dashed #777;color:#666;background:#fff">主题</div>
<div class="a" style="left:786px;top:730px;width:270px;height:1px;background:#ddd"></div>

<!-- Status bar -->
<div class="a" style="left:0;top:761px;width:1080px;height:24px;background:#f3f4f6;border-top:1px solid #ebebeb"></div>
<div class="a" style="left:22px;top:765px;font-size:12.500px;color:#555;white-space:nowrap;line-height:16px">主题：1/54</div>
<svg style="left:815px;top:767px" width="14" height="14"><path d="M2 2l10 10" stroke="#888"/><path d="M0 0h5L0 5zM14 14H9l5-5z" fill="#444"/></svg>
<div class="a" style="left:849px;top:762px;width:24px;height:21px;background:#e6eae9"></div>
<svg style="left:853px;top:763px" width="16" height="18"><ellipse cx="8" cy="11.500" rx="7" ry="4.500" fill="none" stroke="#62c99c" stroke-width="1.100"/><circle cx="8" cy="11.500" r="2.300" fill="none" stroke="#62c99c" stroke-width="1.100"/><path d="M8 2.500v3M3 3.500l1.500 2.500M13 3.500L11.500 6" stroke="#62c99c" stroke-width="1.100"/></svg>
<svg style="left:894px;top:766px" width="12" height="16"><path d="M6 15C3 11 1 8.500 1 6a5 5 0 0 1 10 0c0 2.500-2 5-5 9z" fill="none" stroke="#999" stroke-width="1.100"/><circle cx="6" cy="6" r="1.800" fill="none" stroke="#999"/></svg>
<div class="a" style="left:935px;top:773px;width:9px;height:1.500px;background:#888"></div>
<div class="a" style="left:963px;top:765px;font-size:12px;color:#555;line-height:16px">100%</div>
<svg style="left:1008px;top:768px" width="11" height="11"><path d="M5.500 0v11M0 5.500h11" stroke="#666"/></svg>
<div class="a" style="left:1034px;top:766px;width:1px;height:14px;background:#ddd"></div>
<svg style="left:1047px;top:766px" width="14" height="14"><circle cx="7" cy="7" r="6.300" fill="none" stroke="#444" stroke-width="1.200"/><text x="7" y="10.500" font-size="10" font-weight="bold" font-family="Liberation Sans" text-anchor="middle" fill="#444">?</text></svg>

<!-- Window frame -->
<div class="a" style="left:0;top:0;width:1080px;height:1px;background:#6f94c4"></div>
<div class="a" style="left:0;top:0;width:1px;height:785px;background:linear-gradient(#6f94c4 0,#5b8ac4 55%,#22303e 62%,#22303e 100%)"></div>
<div class="a" style="left:0;top:783px;width:1080px;height:2px;background:#2a3542"></div>
<div class="a" style="left:1079px;top:0;width:1px;height:785px;background:#7c9ac2"></div>
</body></html>
